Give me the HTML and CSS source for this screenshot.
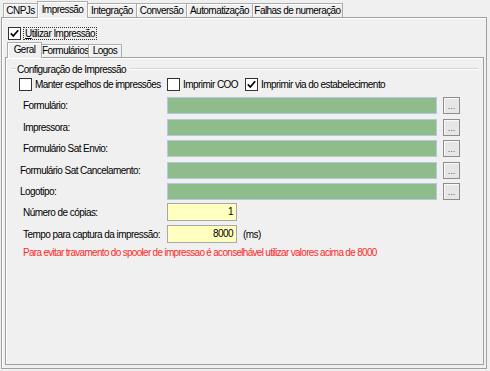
FILE: index.html
```html
<!DOCTYPE html>
<html lang="pt">
<head>
    <meta charset="UTF-8">
    <meta name="viewport" content="width=device-width, initial-scale=1.0">
    <title>Impressão</title>
    <link rel="stylesheet" href="styles.css">
</head>
<body>
    <!-- Outer tabs -->
    <div class="tab-strip outer-strip">
        <div class="tab t-cnpj">CNPJs</div>
        <div class="tab active t-imp">Impressão</div>
        <div class="tab t-int">Integração</div>
        <div class="tab t-conv">Conversão</div>
        <div class="tab t-auto">Automatização</div>
        <div class="tab t-falhas">Falhas de numeração</div>
    </div>

    <div class="page outer-page">
        <div class="use-print">
            <span class="box checked">
                <svg width="11" height="11" viewBox="0 0 11 11"><path d="M1.8 5.4 L4.3 8 L9.2 2.2" fill="none" stroke="#000" stroke-width="1.7"/></svg>
            </span>
            <span class="focus"><u>U</u>tilizar Impressão</span>
        </div>

        <!-- Inner tabs -->
        <div class="tab-strip inner-strip">
            <div class="tab active t-geral">Geral</div>
            <div class="tab t-form">Formulários</div>
            <div class="tab t-logos">Logos</div>
        </div>

        <div class="page inner-page">
            <div class="group-title"><span>Configuração de Impressão</span></div>

            <div class="options">
                <label class="option o-espelhos"><span class="box"></span>Manter espelhos de impressões</label>
                <label class="option o-coo"><span class="box"></span>Imprimir COO</label>
                <label class="option">
                    <span class="box checked">
                        <svg width="11" height="11" viewBox="0 0 11 11"><path d="M1.8 5.4 L4.3 8 L9.2 2.2" fill="none" stroke="#000" stroke-width="1.7"/></svg>
                    </span>Imprimir via do estabelecimento
                </label>
            </div>

            <div class="form">
                <div class="row"><span class="label">Formulário:</span><span class="field green"></span><span class="browse">...</span></div>
                <div class="row"><span class="label">Impressora:</span><span class="field green"></span><span class="browse">...</span></div>
                <div class="row"><span class="label">Formulário Sat Envio:</span><span class="field green"></span><span class="browse">...</span></div>
                <div class="row"><span class="label shift">Formulário Sat Cancelamento:</span><span class="field green"></span><span class="browse">...</span></div>
                <div class="row"><span class="label shift">Logotipo:</span><span class="field green"></span><span class="browse">...</span></div>
                <div class="row num-row"><span class="label">Número de cópias:</span><span class="field yellow">1</span></div>
                <div class="row num-row"><span class="label">Tempo para captura da impressão:</span><span class="field yellow">8000</span><span class="unit">(ms)</span></div>
            </div>

            <p class="warning">Para evitar travamento do spooler de impressao é aconselhável utilizar valores acima de 8000</p>
        </div>
    </div>
</body>
</html>
```

FILE: styles.css
```css
body {
    margin: 0;
    width: 490px;
    height: 371px;
    overflow: hidden;
    background-color: #f0f0f0;
    color: #000;
    font-family: "Liberation Sans", Arial, sans-serif;
    font-size: 10px;
    letter-spacing: -0.55px;
    white-space: nowrap;
}
/* Tabs */
.tab-strip {
    display: flex;
    align-items: flex-end;
    position: relative;
    z-index: 1;
}
.outer-strip {
    height: 17px;
    padding-left: 3px;
}
.inner-strip {
    height: 17px;
    padding-left: 5px;
}
.tab {
    box-sizing: border-box;
    height: 14px;
    margin-left: -1px;
    border: 1px solid #acacac;
    border-bottom: none;
    background-color: #f0f0f0;
    box-shadow: inset 1px 1px #fff;
    text-align: center;
    line-height: 13px;
}
.tab:first-child {
    margin-left: 0;
}
.tab.active {
    height: 17px;
    margin-bottom: -1px;
    position: relative;
    z-index: 2;
    line-height: 15px;
}
.inner-strip .tab {
    height: 13px;
    line-height: 12px;
}
.inner-strip .tab.active {
    height: 16px;
    line-height: 14px;
}
.t-cnpj { width: 35px; }
.t-imp { width: 51px; }
.t-int { width: 50px; }
.t-conv { width: 51px; }
.t-auto { width: 67px; }
.t-falhas { width: 91px; }
.t-geral { width: 35px; }
.t-form { width: 48px; }
.t-logos { width: 34px; }
/* Pages */
.page {
    box-sizing: border-box;
    border: 1px solid #a0a0a0;
    box-shadow: inset 1px 1px #fff;
}
.outer-page {
    width: 486px;
    height: 352px;
    margin-left: 1px;
}
.inner-page {
    width: 479px;
    height: 308px;
    margin-left: 3px;
}
/* Checkboxes */
.box {
    box-sizing: border-box;
    width: 13px;
    height: 13px;
    flex: none;
    border: 1px solid #333;
    background-color: #fff;
    display: flex;
    align-items: center;
    justify-content: center;
}
.use-print {
    display: flex;
    align-items: center;
    height: 13px;
    margin-top: 9px;
    padding-left: 6px;
}
.focus {
    margin-left: 3px;
    padding: 0 1px;
    outline: 1px dotted #333;
    line-height: 11px;
}
.focus u {
    text-decoration-thickness: 1px;
}
/* Group box */
.group-title {
    display: flex;
    align-items: center;
    height: 12px;
    margin: 5px 5px 0 5px;
}
.group-title::before,
.group-title::after {
    content: "";
    height: 1px;
    border-bottom: 1px solid #fff;
    background-color: #d5d5d5;
}
.group-title::before {
    width: 5px;
}
.group-title::after {
    flex: 1;
    margin-left: 3px;
}
.group-title span {
    padding-left: 1px;
}
.options {
    display: flex;
    align-items: center;
    height: 13px;
    margin-top: 3px;
    padding-left: 13px;
}
.option {
    display: flex;
    align-items: center;
}
.option .box {
    margin-right: 3px;
}
.o-espelhos { width: 148px; }
.o-coo { width: 78px; }
/* Fields */
.form {
    margin-top: 6px;
}
.row {
    display: flex;
    align-items: center;
    height: 17px;
    margin-bottom: 4.5px;
}
.row.num-row {
    height: 18px;
    margin-bottom: 4px;
}
.form .row:nth-child(6) {
    margin-top: -1.5px;
}
.label {
    box-sizing: border-box;
    width: 161px;
    padding-left: 17px;
    flex: none;
}
.label.shift {
    padding-left: 14px;
}
.field {
    box-sizing: border-box;
    height: 17px;
    flex: none;
}
.green {
    width: 270px;
    background-color: #8fbc8b;
    border: 1px solid #b4c8e0;
}
.yellow {
    width: 70px;
    height: 18px;
    background-color: #ffffc0;
    border: 1px solid #a8a8a8;
    text-align: right;
    padding-right: 3px;
    line-height: 16px;
}
.browse {
    box-sizing: border-box;
    width: 17px;
    height: 17px;
    margin-left: 6px;
    border: 1px solid #8c8c8c;
    background-color: #e6e6e6;
    box-shadow: inset 1px 1px #fafafa;
    color: #555;
    font-size: 9px;
    letter-spacing: 0;
    text-align: center;
    line-height: 17px;
}
.unit {
    margin-left: 6px;
}
.warning {
    margin: 1px 0 0 0;
    padding-left: 17px;
    line-height: 12px;
    letter-spacing: -0.7px;
    color: #ff2828;
}
```
